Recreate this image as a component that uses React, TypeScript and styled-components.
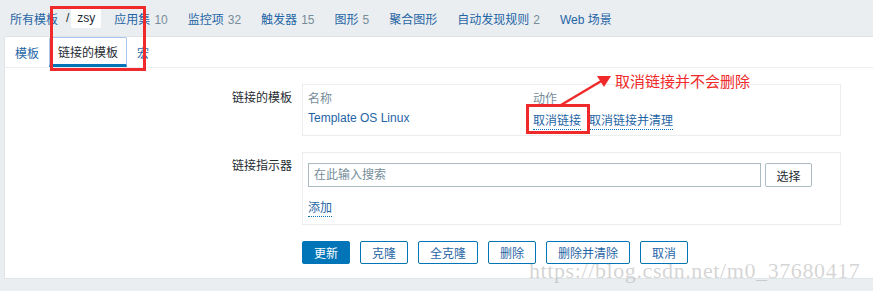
import styled, { createGlobalStyle } from 'styled-components';

const Global = createGlobalStyle`
  body {
    margin: 0;
    background: #ebeef0;
    font-family: "Liberation Sans", Arial, "Noto Sans CJK SC", sans-serif;
    font-size: 12px;
    color: #1f2c33;
  }
`;

const Page = styled.div`
  position: relative;
  width: 873px;
  height: 291px;
  overflow: hidden;
`;

// breadcrumb bar
const Crumbs = styled.nav`
  display: flex;
  align-items: center;
  height: 36px;
  padding-left: 10px;
  box-sizing: border-box;
`;

const CrumbLink = styled.a<{ $gap?: number }>`
  color: #1f65a6;
  text-decoration: none;
  margin-right: ${p => p.$gap ?? 20}px;
  white-space: nowrap;
`;

const Count = styled.span`
  color: #768d99;
  margin-left: 4px;
`;

const Slash = styled.span`
  color: #1f2c33;
  margin: 0 2px 0 -12px;
`;

const Current = styled.span`
  background: #fff;
  color: #1f2c33;
  padding: 3px 6px;
  margin-right: 13px;
  border-radius: 2px;
`;

// white panel
const Panel = styled.div`
  margin-left: 4px;
  height: 243px;
  background: #fff;
  border: 1px solid #dfe4e7;
  border-right: none;
  box-sizing: border-box;
`;

const Tabs = styled.ul`
  display: flex;
  margin: 0;
  padding: 0 0 0 1px;
  list-style: none;
  height: 30px;
  border-bottom: 1px solid #ebeef0;
`;

const Tab = styled.li<{ $active?: boolean }>`
  display: flex;
  align-items: center;
  padding: 0 8px;
  margin-right: 1px;
  box-sizing: border-box;
  color: ${p => (p.$active ? '#1f2c33' : '#1f65a6')};
  border: 1px solid ${p => (p.$active ? '#a9c6ef' : 'transparent')};
  border-bottom: ${p => (p.$active ? '3px solid #0275b8' : '1px solid transparent')};
  border-radius: 2px 2px 0 0;
`;

const Form = styled.div`
  display: grid;
  grid-template-columns: 287px 539px;
  column-gap: 10px;
  row-gap: 16px;
  padding-top: 16px;
`;

const Label = styled.div`
  text-align: right;
  padding-top: 4px;
`;

const Box = styled.div`
  border: 1px solid #ebeef0;
  padding: 4px 5px 7px;
`;

const Table = styled.div`
  display: grid;
  grid-template-columns: 225px 1fr;
  row-gap: 5px;
`;

const Head = styled.div`
  color: #768d99;
`;

const Link = styled.a<{ $dotted?: boolean }>`
  color: #1f65a6;
  text-decoration: none;
  border-bottom: ${p => (p.$dotted ? '1px dotted #0275b8' : 'none')};
  margin-right: 8px;
  padding-bottom: 1px;
`;

const Row = styled.div`
  display: flex;
  align-items: center;
  gap: 4px;
  margin-top: 6px;
`;

const SearchInput = styled.input`
  width: 453px;
  height: 24px;
  box-sizing: border-box;
  border: 1px solid #acbbc2;
  padding: 0 5px;
  font: inherit;
  color: #1f2c33;
  &::placeholder {
    color: #768d99;
  }
`;

const GrayButton = styled.button`
  height: 24px;
  width: 47px;
  border: 1px solid #acbbc2;
  border-radius: 2px;
  background: #fff;
  font: inherit;
  color: #1f2c33;
`;

const AddLine = styled.div`
  margin: 11px 0 2px;
`;

const Actions = styled.div`
  grid-column: 2;
  display: flex;
  gap: 10px;
`;

const Btn = styled.button<{ $primary?: boolean; $w: number }>`
  width: ${p => p.$w}px;
  height: 23px;
  border: 1px solid #0275b8;
  border-radius: 2px;
  background: ${p => (p.$primary ? '#0275b8' : '#fff')};
  color: ${p => (p.$primary ? '#fff' : '#1f65a6')};
  font: inherit;
  padding: 0;
`;

// annotations drawn over the screenshot
const RedBox = styled.div<{ $x: number; $y: number; $w: number; $h: number }>`
  position: absolute;
  left: ${p => p.$x}px;
  top: ${p => p.$y}px;
  width: ${p => p.$w}px;
  height: ${p => p.$h}px;
  border: 3px solid #f02a2a;
  box-sizing: border-box;
  pointer-events: none;
`;

const Note = styled.div`
  position: absolute;
  left: 615px;
  top: 70px;
  color: #f02a2a;
  font-size: 15px;
  font-family: "Noto Sans CJK SC", sans-serif;
`;

const Arrow = styled.svg`
  position: absolute;
  left: 555px;
  top: 70px;
`;

const Watermark = styled.div`
  position: absolute;
  left: 529px;
  top: 258px;
  font-family: "Liberation Serif", "Times New Roman", serif;
  font-size: 22px;
  color: rgba(160, 160, 160, 0.45);
  letter-spacing: 0.6px;
  white-space: nowrap;
  pointer-events: none;
`;

export default function App() {
  return (
    <Page>
      <Global />
      <Crumbs>
        <CrumbLink>所有模板</CrumbLink>
        <Slash>/</Slash>
        <Current>zsy</Current>
        <CrumbLink>应用集<Count>10</Count></CrumbLink>
        <CrumbLink>监控项<Count>32</Count></CrumbLink>
        <CrumbLink>触发器<Count>15</Count></CrumbLink>
        <CrumbLink>图形<Count>5</Count></CrumbLink>
        <CrumbLink>聚合图形</CrumbLink>
        <CrumbLink>自动发现规则<Count>2</Count></CrumbLink>
        <CrumbLink>Web 场景</CrumbLink>
      </Crumbs>

      <Panel>
        <Tabs>
          <Tab>模板</Tab>
          <Tab $active>链接的模板</Tab>
          <Tab>宏</Tab>
        </Tabs>

        <Form>
          <Label>链接的模板</Label>
          <Box>
            <Table>
              <Head>名称</Head>
              <Head>动作</Head>
              <div><Link>Template OS Linux</Link></div>
              <div>
                <Link $dotted>取消链接</Link>
                <Link $dotted>取消链接并清理</Link>
              </div>
            </Table>
          </Box>

          <Label>链接指示器</Label>
          <Box>
            <Row>
              <SearchInput placeholder="在此输入搜索" />
              <GrayButton>选择</GrayButton>
            </Row>
            <AddLine><Link $dotted>添加</Link></AddLine>
          </Box>

          <Actions>
            <Btn $primary $w={48}>更新</Btn>
            <Btn $w={48}>克隆</Btn>
            <Btn $w={60}>全克隆</Btn>
            <Btn $w={48}>删除</Btn>
            <Btn $w={84}>删除并清除</Btn>
            <Btn $w={48}>取消</Btn>
          </Actions>
        </Form>
      </Panel>

      <RedBox $x={50} $y={6} $w={96} $h={65} />
      <RedBox $x={526} $y={104} $w={64} $h={30} />
      <Arrow width="60" height="40" viewBox="0 0 60 40">
        <line x1="6" y1="35" x2="48" y2="10" stroke="#f02a2a" strokeWidth="2.5" />
        <polygon points="56,6 42,6 49,17" fill="#f02a2a" />
      </Arrow>
      <Note>取消链接并不会删除</Note>
      <Watermark>https://blog.csdn.net/m0_37680417</Watermark>
    </Page>
  );
}
